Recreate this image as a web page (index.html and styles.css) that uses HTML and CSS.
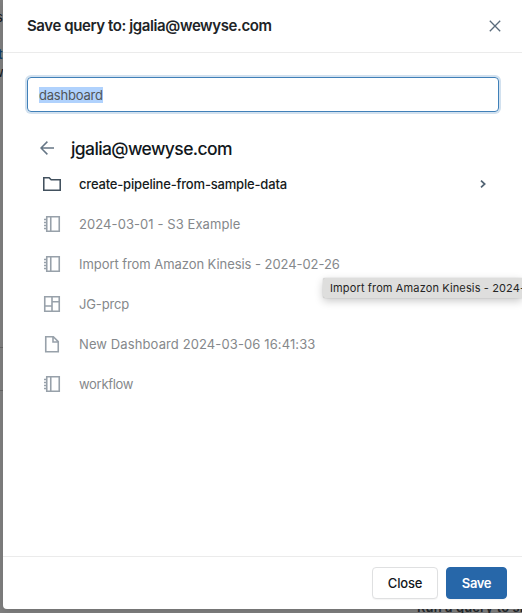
FILE: index.html
```html
<!DOCTYPE html>
<html lang="en">
<head>
<meta charset="utf-8">
<title>Save query</title>
<link rel="stylesheet" href="styles.css">
</head>
<body>
<svg class="defs" aria-hidden="true">
  <symbol id="notebook" viewBox="0 0 18 18"><path d="M3.75 1.75h12.5v14.5H3.75zM7.75 1.75v14.5M1 4.5h3M1 7.5h3M1 10.5h3M1 13.5h3"/></symbol>
</svg>
<div class="backdrop">
  <span class="behind behind-s">s</span>
  <span class="behind behind-link">t</span>
  <span class="behind behind-w">w</span>
  <span class="rule rule-a"></span>
  <span class="rule rule-b"></span>
  <span class="behind behind-run">Run a query to show</span>
</div>
<main class="modal">
  <header class="head">
    <h1 class="title">Save query to: jgalia@wewyse.com</h1>
    <svg class="x" viewBox="0 0 12 12"><path d="M.8.7l10.4 10.6M11.2.7L.8 11.3"/></svg>
  </header>
  <section class="body">
    <div class="field"><span class="selected">dashboard</span></div>
    <div class="crumb">
      <svg class="back" viewBox="0 0 14 14"><path d="M14 7H1M7.4.6L1 7l6.4 6.4"/></svg>
      <h2 class="path">jgalia@wewyse.com</h2>
    </div>
    <ul class="list">
      <li class="row folder"><svg class="icon" viewBox="0 0 18 18"><path d="M.75 2.75h5.4l2 2h9.1v10.5H.75z"/></svg><span class="name n1">create-pipeline-from-sample-data</span><svg class="chev" viewBox="0 0 6 8"><path d="M1 .6L4.7 4 1 7.4"/></svg></li>
      <li class="row"><svg class="icon"><use href="#notebook"/></svg><span class="name n2">2024-03-01 - S3 Example</span></li>
      <li class="row"><svg class="icon"><use href="#notebook"/></svg><span class="name n3">Import from Amazon Kinesis - 2024-02-26</span></li>
      <li class="row"><svg class="icon" viewBox="0 0 18 18"><path d="M1.75 1.75h14.5v14.5H1.75zM9 1.75v14.5M1.75 11H9M9 6.8h7.25"/></svg><span class="name n4">JG-prcp</span></li>
      <li class="row"><svg class="icon" viewBox="0 0 18 18"><path d="M2.75 1.75h7.6l4.9 4.9v10.1H2.75zM10 2v5h5"/></svg><span class="name n5">New Dashboard 2024-03-06 16:41:33</span></li>
      <li class="row"><svg class="icon"><use href="#notebook"/></svg><span class="name n6">workflow</span></li>
    </ul>
  </section>
  <footer class="foot">
    <button class="btn">Close</button>
    <button class="btn primary">Save</button>
  </footer>
</main>
<div class="tooltip"><span>Import from Amazon Kinesis - 2024-02-26</span></div>
</body>
</html>
```
FILE: styles.css
```css
* { box-sizing: border-box; }
body { margin: 0; width: 522px; height: 613px; overflow: hidden; position: relative; background: #808080; font: 13px/20px Inter, "Liberation Sans", sans-serif; color: #11171c; }
.defs { position: absolute; width: 0; height: 0; }
svg { fill: none; stroke: currentColor; stroke-width: 1.6; flex: none; }
.backdrop { position: absolute; inset: 0; overflow: hidden; }
.behind { position: absolute; white-space: nowrap; color: #16191c; }
.behind-s { left: -4px; top: 7px; }
.behind-link { left: -2px; top: 44px; color: #123c66; font-weight: 600; }
.behind-w { left: -7px; top: 62px; }
.behind-run { left: 417px; top: 597px; font-weight: 600; color: #24282c; letter-spacing: .1px; }
.rule { position: absolute; left: 0; width: 3px; height: 1px; background: #666; }
.rule-a { top: 347px; }
.rule-b { top: 390px; }
.modal { position: relative; display: flex; flex-direction: column; margin-left: 3px; width: 519px; height: 609px; background: #fff; border-radius: 0 0 0 4px; box-shadow: 0 3px 10px rgba(0,0,0,.12); }
.head { height: 53px; display: flex; align-items: center; justify-content: space-between; padding: 0 21px 0 24px; border-bottom: 1px solid #ebebeb; }
.title { margin: 0; font-size: 15px; font-weight: 600; letter-spacing: -.4px; white-space: nowrap; color: #202326; }
.x { width: 12px; height: 12px; color: #5a6b7b; stroke-width: 1.3; }
.body { flex: 1; padding: 24px 23px 0 24px; }
.field { height: 35px; display: flex; align-items: center; padding: 0 11px; border: 1px solid #4080b8; border-radius: 4px; box-shadow: 0 0 0 2px #d2e1ef; color: #505558; }
.selected { height: 16px; line-height: 16px; letter-spacing: -.2px; background: #b0d2fd; white-space: nowrap; }
.crumb { display: flex; align-items: center; height: 32px; margin-top: 20px; padding-left: 13px; }
.back { width: 14px; height: 14px; color: #657685; stroke-width: 1.5; }
.path { margin: 2px 0 0 17px; font-size: 17.5px; font-weight: 500; letter-spacing: -.6px; }
.list { list-style: none; margin: 0; padding: 0; }
.row { display: flex; align-items: center; height: 40px; padding: 0 13px 0 16px; color: #98a1aa; }
.icon { width: 18px; height: 18px; }
.name { margin-left: 18px; color: #85888b; white-space: nowrap; }
.n1 { letter-spacing: -.18px; }
.n2 { letter-spacing: .08px; }
.n3 { letter-spacing: -.06px; }
.n4 { letter-spacing: -.15px; }
.n5 { letter-spacing: .11px; }
.n6 { letter-spacing: -.3px; }
.folder { color: #42515e; }
.folder .name { color: #161b20; font-weight: 500; }
.chev { width: 6px; height: 8px; margin-left: auto; stroke-width: 1.7; color: #526474; }
.foot { height: 53px; border-top: 1px solid #ebebeb; display: flex; gap: 8px; padding: 10px 0 0 369px; }
.btn { height: 32px; width: 66px; padding: 0; border: 1px solid #dfe0e1; border-radius: 4px; background: #fff; font: 500 13px/20px Inter, sans-serif; letter-spacing: -.2px; color: #11171c; box-shadow: 0 1px 1px rgba(0,0,0,.04); }
.primary { width: 61px; background: #2767a9; border-color: #2767a9; color: #fff; font-weight: 600; letter-spacing: -.35px; }
.tooltip { position: absolute; left: 323px; top: 278px; width: 199px; height: 20px; padding-left: 7px; border-radius: 2px 0 0 2px; background: #dededd; box-shadow: 0 0 1px rgba(0,0,0,.35), 0 3px 8px rgba(0,0,0,.22); font-size: 11px; line-height: 20px; letter-spacing: .13px; white-space: nowrap; overflow: hidden; color: #252525; }
```
